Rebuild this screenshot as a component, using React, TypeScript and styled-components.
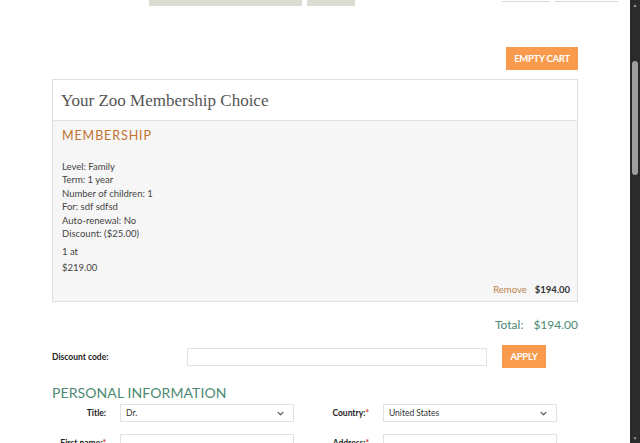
import React from "react";
import styled, { createGlobalStyle } from "styled-components";

const GlobalStyle = createGlobalStyle`
  html, body {
    margin: 0;
    padding: 0;
    background: #fff;
    overflow: hidden;
  }
  body {
    font-family: Lato, "Open Sans", sans-serif;
    color: #333;
  }
`;

const details = [
  "Level: Family",
  "Term: 1 year",
  "Number of children: 1",
  "For: sdf sdfsd",
  "Auto-renewal: No",
  "Discount: ($25.00)",
];

function Chevron() {
  return (
    <svg width="9" height="9" viewBox="0 0 10 10">
      <path d="M2 3.5 L5 6.5 L8 3.5" fill="none" stroke="#444" strokeWidth="1.2" />
    </svg>
  );
}

function App() {
  return (
    <>
      <GlobalStyle />
      <Shell>
        <Page>
          <TopStrip>
            <Tab $w={153} />
            <Tab $w={48} />
            <Spacer />
            <Outline $w={48} />
            <Outline $w={63} />
          </TopStrip>

          <Container>
            <CartActions>
              <OrangeButton $w={72}>EMPTY CART</OrangeButton>
            </CartActions>

            <Card>
              <CardHeader>Your Zoo Membership Choice</CardHeader>
              <CardBody>
                <ItemTitle>MEMBERSHIP</ItemTitle>
                <DetailList>
                  {details.map((d) => (
                    <div key={d}>{d}</div>
                  ))}
                </DetailList>
                <Qty>1 at</Qty>
                <Qty>$219.00</Qty>
                <ItemFooter>
                  <RemoveLink>Remove</RemoveLink>
                  <Price>$194.00</Price>
                </ItemFooter>
              </CardBody>
            </Card>

            <TotalRow>
              <span>Total:</span>
              <span>$194.00</span>
            </TotalRow>

            <DiscountRow>
              <DiscountLabel>Discount code:</DiscountLabel>
              <TextBox $w={300} />
              <OrangeButton $w={44}>APPLY</OrangeButton>
            </DiscountRow>

            <SectionTitle>PERSONAL INFORMATION</SectionTitle>

            <FormGrid>
              <FieldLabel>Title:</FieldLabel>
              <SelectBox>
                <span>Dr.</span>
                <Chevron />
              </SelectBox>
              <FieldLabel>
                Country:<Req>*</Req>
              </FieldLabel>
              <SelectBox>
                <span>United States</span>
                <Chevron />
              </SelectBox>

              <FieldLabel>
                First name:<Req>*</Req>
              </FieldLabel>
              <TextBox $w={174} />
              <FieldLabel>
                Address:<Req>*</Req>
              </FieldLabel>
              <TextBox $w={174} />
            </FormGrid>
          </Container>
        </Page>

        <Scrollbar>
          <Arrow>▲</Arrow>
          <Track>
            <Thumb />
          </Track>
          <Arrow>▼</Arrow>
        </Scrollbar>
      </Shell>
    </>
  );
}

export default App;

const Shell = styled.div`
  display: flex;
  width: 640px;
  height: 443px;
  overflow: hidden;
`;

const Page = styled.div`
  flex: 1;
  overflow: hidden;
  display: flex;
  flex-direction: column;
`;

const TopStrip = styled.div`
  display: flex;
  align-items: flex-start;
  gap: 5px;
  padding: 0 12px 0 149px;
  height: 7px;
`;

const Tab = styled.div<{ $w: number }>`
  width: ${(p) => p.$w}px;
  height: 6px;
  background: #dcdcd3;
`;

const Spacer = styled.div`
  flex: 1;
`;

const Outline = styled.div<{ $w: number }>`
  width: ${(p) => p.$w}px;
  height: 1px;
  border-bottom: 1px solid #d8d8d8;
`;

const Container = styled.div`
  width: 526px;
  margin: 0 auto;
  display: flex;
  flex-direction: column;
`;

const CartActions = styled.div`
  display: flex;
  justify-content: flex-end;
  margin-top: 41px;
  margin-bottom: 9px;
`;

const OrangeButton = styled.button<{ $w: number }>`
  border: none;
  background: #fa9a4c;
  color: #fff;
  font-family: Lato, sans-serif;
  font-weight: 700;
  font-size: 9.5px;
  height: 23px;
  width: ${(p) => p.$w}px;
  padding: 0;
  white-space: nowrap;
  letter-spacing: -0.3px;
  cursor: pointer;
`;

const Card = styled.div`
  border: 1px solid #dedede;
  display: flex;
  flex-direction: column;
`;

const CardHeader = styled.div`
  background: #fff;
  height: 41px;
  padding-left: 8px;
  padding-top: 2px;
  box-sizing: border-box;
  display: flex;
  align-items: center;
  font-family: "Liberation Serif", "DejaVu Serif", serif;
  font-size: 17px;
  color: #555;
  border-bottom: 1px solid #e2e2e2;
`;

const CardBody = styled.div`
  background: #f6f6f6;
  padding: 7px 6px 6px 9px;
  height: 167px;
  display: flex;
  flex-direction: column;
  font-size: 9.5px;
  color: #444;
`;

const ItemTitle = styled.div`
  font-size: 12.5px;
  letter-spacing: 0.9px;
  color: #c2722e;
  margin-bottom: 17px;
`;

const DetailList = styled.div`
  line-height: 13.4px;
  margin-bottom: 4px;
`;

const Qty = styled.div`
  line-height: 16px;
`;

const ItemFooter = styled.div`
  margin-top: auto;
  display: flex;
  justify-content: flex-end;
  gap: 8px;
  padding-right: 1px;
`;

const RemoveLink = styled.span`
  color: #b9834a;
`;

const Price = styled.span`
  font-weight: 700;
  color: #333;
`;

const TotalRow = styled.div`
  display: flex;
  justify-content: flex-end;
  gap: 10px;
  margin-top: 15px;
  font-size: 12px;
  color: #4b8a74;
`;

const DiscountRow = styled.div`
  display: flex;
  align-items: center;
  margin-top: 13px;
`;

const DiscountLabel = styled.div`
  width: 135px;
  font-size: 8.5px;
  font-weight: 700;
  color: #222;
`;

const TextBox = styled.div<{ $w: number }>`
  width: ${(p) => p.$w}px;
  height: 18px;
  box-sizing: border-box;
  border: 1px solid #e2e2e2;
  background: #fff;
  margin-right: 15px;
`;

const SectionTitle = styled.div`
  margin-top: 16px;
  font-size: 14px;
  color: #4d8a72;
  letter-spacing: 0.1px;
`;

const FormGrid = styled.div`
  display: grid;
  grid-template-columns: 54px 174px 61px 174px;
  column-gap: 14px;
  row-gap: 12px;
  align-items: center;
  margin-top: 3px;
`;

const FieldLabel = styled.div`
  text-align: right;
  font-size: 8.5px;
  font-weight: 700;
  color: #222;
  white-space: nowrap;
`;

const Req = styled.span`
  color: #d03030;
`;

const SelectBox = styled.div`
  height: 18px;
  box-sizing: border-box;
  border: 1px solid #e2e2e2;
  background: #fff;
  display: flex;
  align-items: center;
  justify-content: space-between;
  padding: 0 8px 0 5px;
  font-size: 8.5px;
  color: #333;
`;

const Scrollbar = styled.div`
  width: 10px;
  background: #2b2b2b;
  display: flex;
  flex-direction: column;
  align-items: center;
`;

const Arrow = styled.div`
  color: #9a9a9a;
  font-size: 5px;
  height: 10px;
  line-height: 10px;
`;

const Track = styled.div`
  flex: 1;
  width: 100%;
  display: flex;
  justify-content: center;
`;

const Thumb = styled.div`
  margin-top: 51px;
  width: 6px;
  height: 114px;
  border-radius: 3px;
  background: #9e9e9e;
`;
